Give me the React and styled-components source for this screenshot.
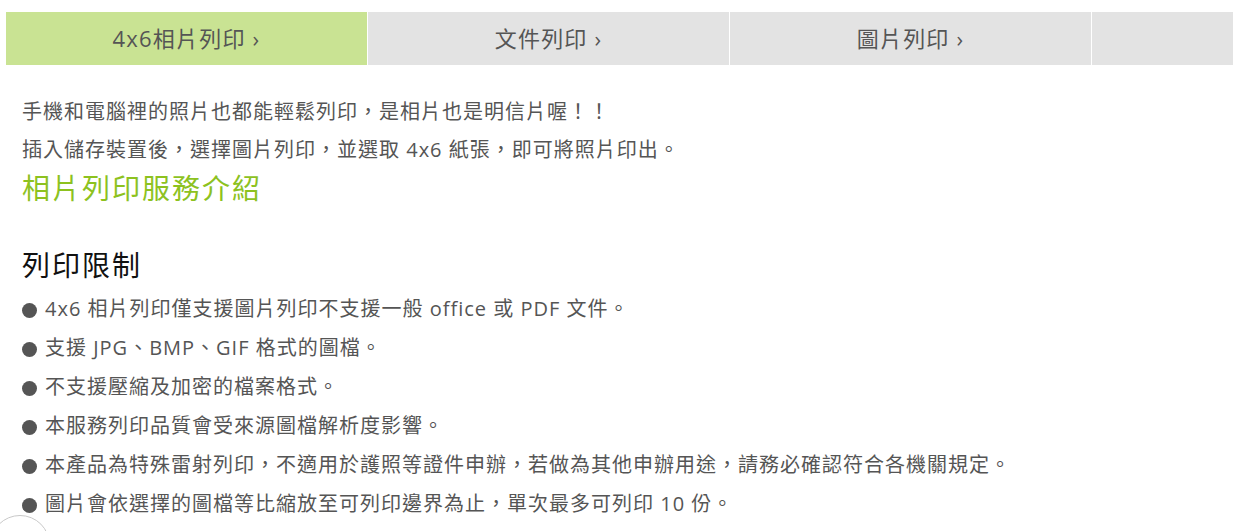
import React from 'react';
import styled, { createGlobalStyle } from 'styled-components';

const GlobalStyle = createGlobalStyle`
	html, body {
		margin: 0;
		padding: 0;
		background: #fff;
		overflow: hidden;
	}
	body {
		font-family: "Open Sans", "Noto Sans CJK TC", sans-serif;
		color: #555;
	}
`;

const Page = styled.div`
	padding: 12px 0 0 6px;
	width: 1227px;
	overflow: hidden;
`;

const TabBar = styled.nav`
	display: flex;
	gap: 1px;
	width: 1447px;
`;

const Tab = styled.a`
	flex: 0 0 361px;
	height: 53px;
	padding-bottom: 3px;
	box-sizing: border-box;
	display: flex;
	align-items: center;
	justify-content: center;
	background: ${p => (p.active ? '#c9e393' : '#e3e3e3')};
	color: #555;
	font-size: 22px;
	letter-spacing: 1.2px;
	text-decoration: none;
	cursor: pointer;
`;

const Content = styled.section`
	padding: 28px 16px 0;
`;

const Intro = styled.p`
	margin: 0;
	font-size: 20px;
	line-height: 38px;
	letter-spacing: 1px;
	color: #555;
`;

const ServiceLink = styled.a`
	display: block;
	font-size: 28px;
	line-height: 38px;
	letter-spacing: 2px;
	color: #8dc21f;
	text-decoration: none;
`;

const Heading = styled.h3`
	margin: 39px 0 0;
	font-size: 28px;
	line-height: 38px;
	font-weight: 400;
	letter-spacing: 2px;
	color: #111;
`;

const List = styled.ul`
	list-style: none;
	margin: 5px 0 0;
	padding: 0;
`;

const Item = styled.li`
	display: flex;
	align-items: center;
	font-size: 20px;
	line-height: 39px;
	letter-spacing: 1px;
	color: #555;

	&::before {
		content: '';
		flex: 0 0 15px;
		height: 15px;
		margin: 3px 8px 0 0;
		border-radius: 50%;
		background: #555;
	}
`;

const TopButton = styled.button`
	position: fixed;
	left: -10px;
	bottom: -44px;
	width: 60px;
	height: 60px;
	border-radius: 50%;
	border: 1px solid #c8c8c8;
	background: #fff;
	padding: 0;
`;

const tabs = ['4x6相片列印', '文件列印', '圖片列印', ''];

const rules = [
	'4x6 相片列印僅支援圖片列印不支援一般 office 或 PDF 文件。',
	'支援 JPG、BMP、GIF 格式的圖檔。',
	'不支援壓縮及加密的檔案格式。',
	'本服務列印品質會受來源圖檔解析度影響。',
	'本產品為特殊雷射列印，不適用於護照等證件申辦，若做為其他申辦用途，請務必確認符合各機關規定。',
	'圖片會依選擇的圖檔等比縮放至可列印邊界為止，單次最多可列印 10 份。',
];

export default function App() {
	return (
		<>
			<GlobalStyle />
			<Page>
				<TabBar>
					{tabs.map((t, i) => (
						<Tab key={i} active={i === 0 ? 1 : 0}>
							{t && `${t} ›`}
						</Tab>
					))}
				</TabBar>
				<Content>
					<Intro>
						手機和電腦裡的照片也都能輕鬆列印，是相片也是明信片喔！！
						<br />
						插入儲存裝置後，選擇圖片列印，並選取 4x6 紙張，即可將照片印出。
					</Intro>
					<ServiceLink>相片列印服務介紹</ServiceLink>
					<Heading>列印限制</Heading>
					<List>
						{rules.map(r => (
							<Item key={r}>{r}</Item>
						))}
					</List>
				</Content>
			</Page>
			<TopButton aria-label="top" />
		</>
	);
}
